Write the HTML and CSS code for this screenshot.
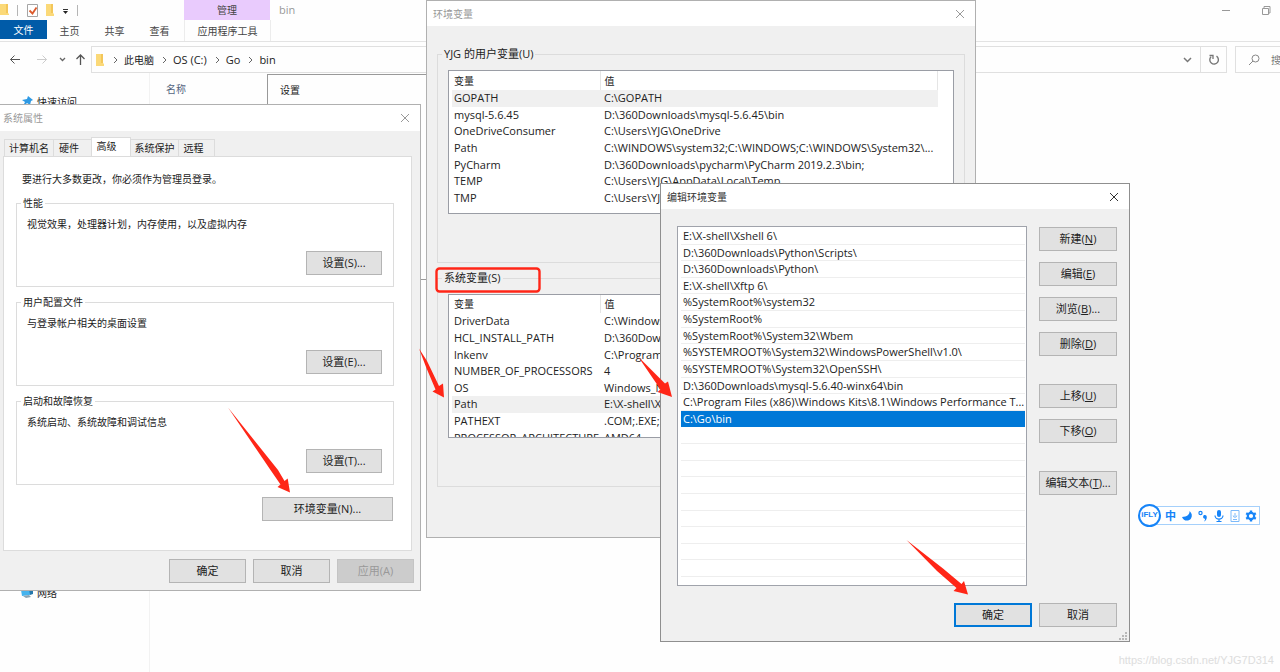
FILE: index.html
```html
<!DOCTYPE html>
<html lang="zh-CN">
<head>
<meta charset="utf-8">
<title>bin</title>
<link rel="stylesheet" href="styles.css">
</head>
<body>
<main class="desktop">
  <section class="explorer">
    <header class="caption">
      <div class="quick">
        <svg width="80" height="20" viewBox="0 0 80 20" aria-hidden="true">
          <path d="M0 4h7v8l2 2v1H0z" fill="#fbd978"/><path d="M6 4h2v9H6z" fill="#f3c65a"/>
          <path d="M17.500 5v11M77.500 5v11" stroke="#b5b5b5"/>
          <path d="M27.500 4.500h10v12h-10z" fill="#fff" stroke="#a5a5a5"/><path d="M29.500 10.500l3 3 4-6" fill="none" stroke="#dc5a2c" stroke-width="1.800"/>
          <path d="M46 4h6v8l2 2v2h-8z" fill="#fbd978"/><path d="M51 4h2v9h-2z" fill="#f3c65a"/>
          <path d="M63 9.500h5" stroke="#333"/><path d="M63 11h5l-2.500 3z" fill="#222"/>
        </svg>
      </div>
      <div class="context-title">管理</div>
      <div class="window-name">bin</div>
      <div class="window-controls">
        <button type="button" aria-label="最小化"><svg width="10" height="10" viewBox="0 0 10 10"><path d="M1 5.500h8" stroke="#999"/></svg></button>
        <button type="button" aria-label="还原"><svg width="10" height="10" viewBox="0 0 10 10"><path d="M1.500 3.500h6v6h-6zM3 3V1.500h6V8H8" fill="none" stroke="#999"/></svg></button>
      </div>
    </header>
    <nav class="ribbon">
      <button type="button" class="file">文件</button>
      <button type="button">主页</button>
      <button type="button">共享</button>
      <button type="button">查看</button>
      <button type="button" class="context">应用程序工具</button>
    </nav>
    <div class="address-row">
      <div class="arrows">
        <svg width="91" height="26" viewBox="0 0 91 26" fill="none" aria-hidden="true">
          <path d="M20 13.500H10.500m4-4-4 4 4 4" stroke="#555"/>
          <path d="M37 13.500h9.500m-4-4 4 4-4 4" stroke="#ccc"/>
          <path d="M60 12l2.500 2.500L65 12" stroke="#666" stroke-width="1.300"/>
          <path d="M80.500 19V9m-4 4 4-4 4 4" stroke="#555" stroke-width="1.300"/>
        </svg>
      </div>
      <div class="address">
        <svg width="9" height="12" viewBox="0 0 9 12" aria-hidden="true"><path d="M0 0h6v8l2 2v2H0z" fill="#fbd978"/><path d="M5 0h2v9H5z" fill="#f3c65a"/></svg>
        <svg class="sep" width="5" height="8" viewBox="0 0 5 8"><path d="M1 1l3 3-3 3" fill="none" stroke="#666"/></svg>
        <a href="#">此电脑</a>
        <svg class="sep" width="5" height="8" viewBox="0 0 5 8"><path d="M1 1l3 3-3 3" fill="none" stroke="#666"/></svg>
        <a href="#">OS (C:)</a>
        <svg class="sep" width="5" height="8" viewBox="0 0 5 8"><path d="M1 1l3 3-3 3" fill="none" stroke="#666"/></svg>
        <a href="#">Go</a>
        <svg class="sep" width="5" height="8" viewBox="0 0 5 8"><path d="M1 1l3 3-3 3" fill="none" stroke="#666"/></svg>
        <a href="#">bin</a>
        <button type="button" class="history" aria-label="历史"><svg width="9" height="8" viewBox="0 0 9 8"><path d="M1 2l3.500 3.500L8 2" fill="none" stroke="#777" stroke-width="1.500"/></svg></button>
      </div>
      <button type="button" class="refresh" aria-label="刷新"><svg width="12" height="12" viewBox="0 0 12 12"><path d="M8.500 2.200A4.300 4.300 0 1 1 3 2.800" fill="none" stroke="#777" stroke-width="1.400"/><path d="M1.500 1.500H5V5" fill="none" stroke="#777" stroke-width="1.300"/></svg></button>
      <div class="search">
        <svg width="12" height="12" viewBox="0 0 12 12" fill="none" stroke="#888"><circle cx="7.500" cy="4.500" r="3.500"/><path d="M5 7L1 11"/></svg>
        <span>搜索</span>
      </div>
    </div>
    <div class="content">
      <nav class="tree">
        <a href="#"><svg width="12" height="12" viewBox="0 0 12 12"><path d="M7 0l5 4-2 1-1 4-3-2-5 5 3-6-3-2 5-1z" fill="#2f9ae4"/></svg>快速访问</a>
        <a href="#"><svg width="12" height="12" viewBox="0 0 12 12"><path d="M4 1l8-1v7l-3 1z" fill="#2678ac"/><path d="M0 3l8-1 1 6-8 1z" fill="#45b3ee"/><path d="M2 9l6-1 2 2-5 1z" fill="#8aa4b4"/></svg>网络</a>
      </nav>
      <div class="files"><span>名称</span></div>
    </div>
    <div class="flyout">设置</div>
  </section>

  <section class="dialog props" aria-label="系统属性">
    <header class="titlebar"><h2>系统属性</h2><button type="button" aria-label="关闭"><svg width="10" height="10" viewBox="0 0 10 10"><path d="M1 1l8 8M9 1L1 9" stroke="currentColor"/></svg></button></header>
    <div class="tabs">
      <button type="button" class="t-name">计算机名</button>
      <button type="button" class="t-hw">硬件</button>
      <button type="button" class="active">高级</button>
      <button type="button" class="t-prot">系统保护</button>
      <button type="button" class="t-remote">远程</button>
    </div>
    <div class="panel">
      <p class="note">要进行大多数更改，你必须作为管理员登录。</p>
      <fieldset><legend>性能</legend><p>视觉效果，处理器计划，内存使用，以及虚拟内存</p><button type="button" class="btn">设置(S)...</button></fieldset>
      <fieldset><legend>用户配置文件</legend><p>与登录帐户相关的桌面设置</p><button type="button" class="btn">设置(E)...</button></fieldset>
      <fieldset><legend>启动和故障恢复</legend><p>系统启动、系统故障和调试信息</p><button type="button" class="btn">设置(T)...</button></fieldset>
      <button type="button" class="btn env-button">环境变量(N)...</button>
    </div>
    <footer class="actions">
      <button type="button" class="btn">确定</button>
      <button type="button" class="btn">取消</button>
      <button type="button" class="btn" disabled>应用(A)</button>
    </footer>
  </section>

  <section class="dialog env" aria-label="环境变量">
    <header class="titlebar"><h2>环境变量</h2><button type="button" aria-label="关闭"><svg width="10" height="10" viewBox="0 0 10 10"><path d="M1 1l8 8M9 1L1 9" stroke="currentColor"/></svg></button></header>
    <div class="groups">
      <fieldset>
        <legend>YJG 的用户变量(U)</legend>
        <div class="listbox">
          <table class="user-vars">
            <thead><tr><th>变量</th><th>值</th></tr></thead>
            <tbody>
              <tr class="current"><td>GOPATH</td><td>C:\GOPATH</td></tr>
              <tr><td>mysql-5.6.45</td><td>D:\360Downloads\mysql-5.6.45\bin</td></tr>
              <tr><td>OneDriveConsumer</td><td>C:\Users\YJG\OneDrive</td></tr>
              <tr><td>Path</td><td>C:\WINDOWS\system32;C:\WINDOWS;C:\WINDOWS\System32\...</td></tr>
              <tr><td>PyCharm</td><td>D:\360Downloads\pycharm\PyCharm 2019.2.3\bin;</td></tr>
              <tr><td>TEMP</td><td>C:\Users\YJG\AppData\Local\Temp</td></tr>
              <tr><td>TMP</td><td>C:\Users\YJG\AppData\Local\Temp</td></tr>
            </tbody>
          </table>
        </div>
      </fieldset>
      <fieldset>
        <legend>系统变量(S)</legend>
        <div class="listbox">
          <table class="system-vars">
            <thead><tr><th>变量</th><th>值</th></tr></thead>
            <tbody>
              <tr><td>DriverData</td><td>C:\Windows</td></tr>
              <tr><td>HCL_INSTALL_PATH</td><td>D:\360Down</td></tr>
              <tr><td>lnkenv</td><td>C:\Program</td></tr>
              <tr><td>NUMBER_OF_PROCESSORS</td><td>4</td></tr>
              <tr><td>OS</td><td>Windows_NT</td></tr>
              <tr class="current"><td>Path</td><td>E:\X-shell\X</td></tr>
              <tr><td>PATHEXT</td><td>.COM;.EXE;.</td></tr>
              <tr><td>PROCESSOR_ARCHITECTURE</td><td>AMD64</td></tr>
            </tbody>
          </table>
        </div>
      </fieldset>
    </div>
  </section>

  <section class="dialog edit" aria-label="编辑环境变量">
    <header class="titlebar"><h2>编辑环境变量</h2><button type="button" aria-label="关闭"><svg width="10" height="10" viewBox="0 0 10 10"><path d="M1 1l8 8M9 1L1 9" stroke="currentColor"/></svg></button></header>
    <div class="edit-body">
      <ul class="paths">
        <li>E:\X-shell\Xshell 6\</li>
        <li>D:\360Downloads\Python\Scripts\</li>
        <li>D:\360Downloads\Python\</li>
        <li>E:\X-shell\Xftp 6\</li>
        <li>%SystemRoot%\system32</li>
        <li>%SystemRoot%</li>
        <li>%SystemRoot%\System32\Wbem</li>
        <li>%SYSTEMROOT%\System32\WindowsPowerShell\v1.0\</li>
        <li>%SYSTEMROOT%\System32\OpenSSH\</li>
        <li>D:\360Downloads\mysql-5.6.40-winx64\bin</li>
        <li>C:\Program Files (x86)\Windows Kits\8.1\Windows Performance T...</li>
        <li class="selected">C:\Go\bin</li>
        <li></li><li></li><li></li><li></li><li></li><li></li><li></li><li></li><li></li>
      </ul>
      <div class="side">
        <button type="button" class="btn">新建(<u>N</u>)</button>
        <button type="button" class="btn">编辑(<u>E</u>)</button>
        <button type="button" class="btn">浏览(<u>B</u>)...</button>
        <button type="button" class="btn">删除(<u>D</u>)</button>
        <button type="button" class="btn spaced">上移(<u>U</u>)</button>
        <button type="button" class="btn">下移(<u>O</u>)</button>
        <button type="button" class="btn spaced">编辑文本(<u>T</u>)...</button>
      </div>
    </div>
    <footer class="actions">
      <button type="button" class="btn default">确定</button>
      <button type="button" class="btn">取消</button>
    </footer>
    <svg class="grip" width="9" height="9" viewBox="0 0 9 9" fill="#b8b8b8" aria-hidden="true"><path d="M6 0h2v2H6zM3 3h2v2H3zM6 3h2v2H6zM0 6h2v2H0zM3 6h2v2H3zM6 6h2v2H6z"/></svg>
  </section>

  <div class="ime">
    <div class="ime-logo">iFLY</div>
    <span class="ime-mode">中</span>
    <svg width="12" height="12" viewBox="0 0 12 12"><path d="M8.500 1c.5 3-2.500 6-7.500 6 1.500 4.500 7 4.500 9 1.500C11.500 6 11 3 8.500 1z" fill="#1684f8"/></svg>
    <svg width="12" height="12" viewBox="0 0 12 12"><circle cx="3.500" cy="3" r="1.600" fill="none" stroke="#1684f8" stroke-width="1.200"/><path d="M7 5c4-1 3.500 5 0 6.500 1-1.200 1.200-2 .8-2.700C5.800 8.500 5.500 6 7 5z" fill="#1684f8"/></svg>
    <svg width="12" height="12" viewBox="0 0 12 12"><rect x="4" y="0" width="4" height="7" rx="2" fill="#1684f8"/><path d="M2 5.500a4 3.500 0 0 0 8 0M6 9v2.500M3.500 11.500h5" fill="none" stroke="#1684f8" stroke-width="1.200"/></svg>
    <svg width="12" height="12" viewBox="0 0 12 12" fill="none" stroke="#7dbafa"><path d="M2 .5h8v11H2z"/><path d="M6 3v3.500M4.200 5.500a1.800 1.800 0 0 0 3.600 0M4 9.500h4"/></svg>
    <svg width="12" height="12" viewBox="0 0 12 12"><circle cx="6" cy="6" r="3.200" fill="none" stroke="#1684f8" stroke-width="2.200"/><path d="M6 .5v2M6 9.500v2M1.200 3.200l1.700 1M9.100 7.800l1.700 1M1.200 8.800l1.700-1M9.100 4.200l1.700-1" stroke="#1684f8" stroke-width="2.400"/></svg>
  </div>

  <svg class="marks" width="1280" height="672" viewBox="0 0 1280 672" aria-hidden="true">
    <rect x="436.500" y="268.500" width="103" height="23" rx="3" fill="none" stroke="#ff2617" stroke-width="2.400"/>
    <g fill="#ff2617">
      <path d="M228 407.500L278 470l6.500 11 3.200-2.500L290 492.500 277.500 487l3-2.500L270.500 470z"/>
      <path d="M419 348.500L427 361l12 25 4-2.500L444 397.500 432.500 391.500l3-2L426 367z"/>
      <path d="M638 356.500L665 383.500l3-2L672 397 657.500 392l3-2.500z"/>
      <path d="M906.500 540L943 568.500l18.500 15.500 2.500-3L968 594.500 953.500 591l3-3L937 571z"/>
    </g>
  </svg>
  <div class="watermark">https://blog.csdn.net/YJG7D314</div>
</main>
</body>
</html>
```
FILE: styles.css
```css
* { box-sizing: border-box; }
body {
  margin: 0;
  font-family: "Open Sans", "Noto Sans CJK SC", sans-serif;
  font-size: 10px;
  line-height: 14px;
  color: #222;
  background: #fff;
}
h2, p, ul, fieldset, legend { margin: 0; padding: 0; font: inherit; }
ul { list-style: none; }
button { font: inherit; color: inherit; border: 0; padding: 0; background: none; }
a { color: inherit; text-decoration: none; }
svg { display: block; flex: none; }

.desktop { position: relative; min-height: 100vh; overflow: hidden; }

.explorer { display: flex; flex-direction: column; min-height: 100vh; background: #fefefe; }
.caption { display: flex; height: 20px; line-height: 20px; }
.quick { width: 184px; }
.context-title { width: 86px; text-align: center; background: #e9cbfd; color: #444; }
.window-name { padding-left: 9px; font-size: 11px; color: #999; flex: 1; }
.window-controls { display: flex; gap: 30px; padding-right: 9px; }
.ribbon { display: flex; height: 22px; border-bottom: 1px solid #e3e3e3; }
.ribbon button { width: 45px; color: #444; }
.ribbon .file { width: 47px; height: 19px; background: #005ba8; color: #fff; }
.ribbon .context { width: 87px; margin-left: 2px; border: solid #ececec; border-width: 0 1px; }
.address-row { display: flex; padding-top: 4px; height: 31px; overflow: hidden; }
.arrows { width: 91px; }
.address { flex: 1; display: flex; align-items: center; height: 27px; padding-left: 4px; border: 1px solid #e0e0e0; font-size: 11px; }
.address .sep { margin: 0 6px 0 8px; }
.address a:first-of-type { font-size: 10px; }
.history { margin-left: auto; width: 26px; display: flex; justify-content: center; }
.refresh { width: 27px; height: 27px; border: 1px solid #e0e0e0; display: grid; place-items: center; margin-left: -1px; }
.search { display: flex; align-items: center; gap: 11px; width: 45px; height: 27px; margin-left: 8px; padding-left: 12px; border: 1px solid #e0e0e0; border-right: 0; color: #777; overflow: hidden; white-space: nowrap; }
.content { flex: 1; display: flex; }
.tree { width: 150px; display: flex; flex-direction: column; justify-content: space-between; padding: 22px 0 72px 21px; border-right: 1px solid #f2f2f2; }
.tree a { display: flex; align-items: center; gap: 4px; }
.files { padding: 9px 16px; color: #55657e; }
.flyout { position: absolute; left: 267px; top: 74px; width: 160px; height: 206px; padding: 8px 12px; background: #fefefe; border: 1px solid #999; }

.dialog { position: absolute; background: #f0f0f0; border: 1px solid #b0b0b0; }
.titlebar { display: flex; justify-content: space-between; align-items: center; height: 25px; background: #fff; color: #999; }
.btn { height: 24px; width: 78px; background: #e1e1e1; border: 1px solid #b4b4b4; color: #222; font-size: 11px; }
.btn:disabled { background: #ccc; border-color: #c4c4c4; color: #999; }
.actions { display: flex; justify-content: flex-end; }

.props { left: -1px; top: 104px; width: 422px; }
.props .titlebar { padding: 0 10px 0 3px; height: 26px; }
.tabs { display: flex; align-items: flex-end; padding: 7px 4px 0; height: 25px; }
.tabs button { height: 17px; border: 1px solid #dcdcdc; border-width: 1px 1px 0 0; }
.tabs .t-name { width: 50px; border-left-width: 1px; }
.tabs .t-hw { width: 37px; padding-right: 7px; border-right: 0; }
.tabs .active { width: 40px; height: 19px; padding: 0 9px 2px 0; background: #fff; border-left-width: 1px; }
.tabs .t-prot { width: 48px; }
.tabs .t-remote { width: 36px; padding-right: 6px; }
.panel { display: flex; flex-direction: column; margin: 0 8px 0 3px; padding: 15px 17px 29px 12px; background: #fff; border: 1px solid #dcdcdc; }
.note { padding-left: 6px; }
.panel fieldset { height: 91px; margin-top: 8px; padding: 7px 11px 0 10px; border: 1px solid #dcdcdc; }
.note + fieldset { margin-top: 10px; }
.panel legend { margin-left: -6px; padding: 0 2px; }
.panel fieldset .btn { display: block; width: 76px; margin: 20px 0 0 auto; }
.panel .env-button { width: 131px; margin: 12px 1px 0 auto; }
.props .actions { gap: 7px; padding: 8px 6px 7px; }
.props .actions .btn { width: 77px; }

.env { left: 426px; top: 0; width: 550px; height: 538px; }
.env .titlebar { padding: 0 10px 0 6px; }
.groups { padding: 21px 10px 0; }
.groups fieldset { height: 216px; padding: 9px 10px 0; border: 1px solid #dcdcdc; }
.groups fieldset + fieldset { margin-top: 8px; }
.groups legend { margin-left: -6px; padding: 0 2px; font-size: 11px; line-height: 14px; }
.listbox { height: 144px; background: #fff; border: 1px solid #9a9da5; overflow: hidden; }
.listbox table { width: 486px; margin-left: 3px; border-collapse: collapse; table-layout: fixed; font-size: 11px; }
.user-vars { height: 135px; }
.user-vars th { height: 19px; }
.system-vars { height: 151px; }
.system-vars th { height: 18px; }
.listbox th { padding: 0 2px; font-weight: normal; font-size: 10px; text-align: left; border-right: 1px solid #e5e5e5; }
.listbox th:first-child { width: 148px; }
.listbox td { padding: 0 2px; white-space: nowrap; }
.listbox td + td, .listbox th + th { padding-left: 4px; }
.listbox .current { background: #f0f0f0; }

.edit { left: 660px; top: 183px; width: 470px; border-color: #8f8f8f; }
.edit .titlebar { padding: 0 10px 0 6px; color: #333; }
.edit-body { display: flex; gap: 12px; padding: 17px 12px 0 16px; }
.paths { flex: 1; display: grid; grid-template-rows: repeat(21, 1fr); height: 360px; padding: 1px 1px 8px 3px; background: #fff; border: 1px solid #a0a3ab; font-size: 11px; line-height: 16px; }
.paths li { padding-left: 2px; min-height: 0; border-bottom: 1px solid #eee; white-space: nowrap; }
.paths .selected { background: #0078d7; color: #fff; border-color: #0078d7; }
.side { display: flex; flex-direction: column; gap: 11px; padding-top: 1px; }
.side .btn { white-space: nowrap; }
.side .spaced { margin-top: 17px; }
.edit .actions { gap: 7px; padding: 17px 12px 14px; }
.btn.default { border: 2px solid #0078d7; }
.grip { position: absolute; right: 1px; bottom: 0; }

.ime { position: absolute; left: 1149px; top: 506px; display: flex; align-items: center; gap: 4px; height: 19px; padding: 0 2px 0 15px; border: 1px solid #a5d0fb; background: #fff; }
.ime-logo { position: absolute; left: -12px; top: -3px; width: 23px; height: 23px; border: 2px solid #1684f8; border-radius: 50%; background: #fff; color: #1684f8; font: bold 8px/18px "Liberation Sans", sans-serif; text-align: center; }
.ime-mode { width: 12px; font-size: 11px; font-weight: bold; color: #1684f8; }
.marks { position: absolute; left: 0; top: 0; pointer-events: none; }
.watermark { position: absolute; right: 6px; bottom: 5px; font: 11px/14px "Liberation Sans", sans-serif; color: #ddd; }
```
